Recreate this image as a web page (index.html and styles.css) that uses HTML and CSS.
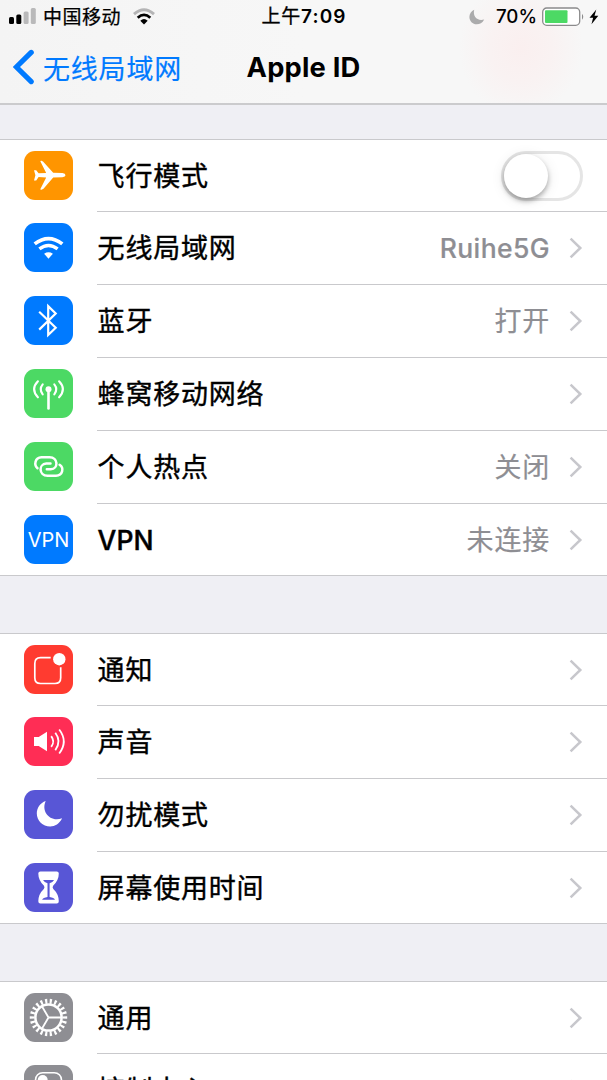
FILE: index.html
```html
<!DOCTYPE html>
<html lang="zh-CN">
<head>
<meta charset="utf-8">
<title>Apple ID</title>
<link rel="stylesheet" href="styles.css">
</head>
<body>
<svg class="defs" width="0" height="0"><defs>
  <symbol id="chevron" viewBox="0 0 14 22"><path d="M1.6 1.6 11.3 11 1.6 20.4" fill="none" stroke="#c7c7cc" stroke-width="2.5"/></symbol>
</defs></svg>
<div class="screen">
  <header class="header">
    <div class="status">
      <div class="status-left">
        <svg class="signal" width="28" height="17" viewBox="0 0 28 17"><rect x="0" y="9" width="5" height="7" rx="1.5"/><rect x="7.3" y="6.5" width="5" height="9.5" rx="1.5"/><g fill="#b9b9ba"><rect x="14.6" y="3.5" width="5" height="12.5" rx="1.5"/><rect x="21.8" y="0" width="5" height="16" rx="1.5"/></g></svg>
        <span class="carrier">中国移动</span>
        <svg class="wifi" width="22" height="17" viewBox="0 0 22 17" fill="none" stroke="#000"><path d="M1 6.1Q11-2.7 21 6.1" stroke="#b4b4b5" stroke-width="2.9"/><path d="M4.7 9.7Q11 4.1 17.3 9.7" stroke-width="2.8"/><path d="M7.3 12.8Q11 9.4 14.7 12.8L11 16.5Z" fill="#000" stroke="none"/></svg>
      </div>
      <div class="clock"><span class="ampm">上午</span>7:09</div>
      <div class="status-right">
        <svg class="dnd" width="16" height="16" viewBox="0 0 16 16"><path d="M5.2.8C3.5 7.3 8.4 12.6 15.2 10.5 13.5 14 10.7 15.3 7.8 15.3 3.6 15.3.4 12 .4 8 .4 4.8 2.2 2.1 5.2.8Z" fill="#ababac"/></svg>
        <span class="percent">70%</span>
        <svg class="battery" width="43" height="20" viewBox="0 0 43 20"><rect x=".7" y="1" width="37" height="17.3" rx="4" fill="#fff" stroke="#8b8b8c" stroke-width="1.3"/><rect x="3" y="3.3" width="22.5" height="12.7" rx="1" fill="#4cd964"/><path d="M40 6.7Q42.5 9.7 40 12.7Z" fill="#8b8b8c"/></svg>
        <svg class="bolt" width="10" height="16" viewBox="0 0 10 16"><path d="M7.3.5.5 8.8H4.1L2.5 15.2 9.3 6.7H5.5Z"/></svg>
      </div>
    </div>
    <nav class="nav">
      <a class="back"><svg width="22" height="36" viewBox="0 0 22 36"><path d="M18.2 3.4 3.4 18 18.2 32.6" fill="none" stroke="#007aff" stroke-width="5.2" stroke-linecap="round"/></svg><span>无线局域网</span></a>
      <h1 class="title">Apple ID</h1>
    </nav>
  </header>

  <main class="list">
    <section class="group">
      <div class="row">
        <svg class="icon orange" viewBox="0 0 49 49"><path d="M10 19.2H12.2L14.6 22.3 22.2 22 16.3 10.2Q16.2 9.6 17.5 9.8L19 10.5 29.2 21.8 38.4 22Q41.5 22.6 41.5 24.2 41.5 25.8 38.4 26.3L29.2 26.5 19.5 37.7 17.5 38.7Q16 38.9 16.4 38L22.2 26.4 14.6 26 12.2 29.5H10L11.4 24.3Z" fill="#fff"/></svg>
        <div class="cell"><span class="label">飞行模式</span><span class="switch"><i class="knob"></i></span></div>
      </div>
      <div class="row">
        <svg class="icon blue" viewBox="0 0 49 49" fill="none" stroke="#fff"><path d="M10.7 20.9Q24.5 10.2 38.3 20.9" stroke-width="3.7"/><path d="M15.4 25.9Q24.5 19.1 33.6 25.9" stroke-width="3.5"/><path d="M20.1 30.7Q24.5 27.9 28.9 30.7L24.5 35.8Z" fill="#fff" stroke="none"/></svg>
        <div class="cell"><span class="label">无线局域网</span><span class="value latin">Ruihe5G</span><svg class="chevron"><use href="#chevron"/></svg></div>
      </div>
      <div class="row">
        <svg class="icon blue" viewBox="0 0 49 49"><path d="M15.2 15.8 31.7 31.8 24.2 39V10.2L31.7 17.5 15.2 33.6" fill="none" stroke="#fff" stroke-width="2.2"/></svg>
        <div class="cell"><span class="label">蓝牙</span><span class="value">打开</span><svg class="chevron"><use href="#chevron"/></svg></div>
      </div>
      <div class="row">
        <svg class="icon green" viewBox="0 0 49 49" fill="none" stroke="#fff" stroke-width="2.1" stroke-linecap="round"><path d="M24.5 22V39.5" stroke-width="2.6"/><circle cx="24.5" cy="20.3" r="3" fill="#fff" stroke="none"/><path d="M18.7 15.4Q14.7 20.3 18.7 25.4M30.3 15.4Q34.3 20.3 30.3 25.4M13.9 12.3Q6.3 20.3 13.9 28.3M35.1 12.3Q42.7 20.3 35.1 28.3"/></svg>
        <div class="cell"><span class="label">蜂窝移动网络</span><svg class="chevron"><use href="#chevron"/></svg></div>
      </div>
      <div class="row">
        <svg class="icon green" viewBox="0 0 49 49" fill="none" stroke="#fff" stroke-width="2.5" stroke-linecap="round"><path d="M13.5 26.2C9.8 23 10.8 15.5 17.5 15.3H25.5C34.5 15.5 34.5 26.8 26.8 27.3H22.8"/><path d="M35.6 22.8C40.3 26 38.8 33.6 32 33.7H23.6C14.5 33.5 14.5 22.1 22.2 21.6H26.5"/></svg>
        <div class="cell"><span class="label">个人热点</span><span class="value">关闭</span><svg class="chevron"><use href="#chevron"/></svg></div>
      </div>
      <div class="row">
        <div class="icon blue vpn">VPN</div>
        <div class="cell"><span class="label latin">VPN</span><span class="value">未连接</span><svg class="chevron"><use href="#chevron"/></svg></div>
      </div>
    </section>

    <section class="group">
      <div class="row">
        <svg class="icon red" viewBox="0 0 49 49"><path d="M26.7 12.7H16.5Q10.8 12.7 10.8 18.4V32.8Q10.8 38.5 16.5 38.5H31Q36.7 38.5 36.7 32.8V22.2" fill="none" stroke="#fff" stroke-width="1.7"/><circle cx="35.3" cy="14.2" r="6.2" fill="#fff"/></svg>
        <div class="cell"><span class="label">通知</span><svg class="chevron"><use href="#chevron"/></svg></div>
      </div>
      <div class="row">
        <svg class="icon pink" viewBox="0 0 49 49"><path d="M10 20H14.7L23 14.7V34.2L14.7 29H10Z" fill="#fff"/><path d="M27.2 19.1Q31.3 24.5 27.2 29.9M31.3 15.8Q37.8 24.5 31.3 33.2M35.2 12.5Q44.4 24.5 35.2 36.5" fill="none" stroke="#fff" stroke-width="1.8"/></svg>
        <div class="cell"><span class="label">声音</span><svg class="chevron"><use href="#chevron"/></svg></div>
      </div>
      <div class="row">
        <svg class="icon purple" viewBox="0 0 49 49"><path d="M21.7 10.9C16.8 21.6 26.1 32.5 38.1 28.2 35.5 33.7 30.9 36.4 26.2 36.4 18.7 36.4 12.8 30.7 12.8 23.5 12.8 17.7 16.3 12.8 21.7 10.9Z" fill="#fff"/></svg>
        <div class="cell"><span class="label">勿扰模式</span><svg class="chevron"><use href="#chevron"/></svg></div>
      </div>
      <div class="row">
        <svg class="icon purple" viewBox="0 0 49 49"><path d="M16.4 8.5H32.7Q34.8 8.5 34.8 10.5 34.8 17.2 29.3 22.5 27.9 24.2 29.3 25.9 34.8 31 34.8 38.3 34.8 40.5 32.7 40.5H16.4Q14.3 40.5 14.3 38.3 14.3 31 19.8 25.9 21.2 24.2 19.8 22.5 14.3 17.2 14.3 10.5 14.3 8.5 16.4 8.5Z" fill="#fff"/><path d="M19 16.9H30.1Q28.8 19.1 25.6 20.3V34Q30 34.6 31 36.7H18.1Q19.1 34.6 23.5 34V20.3Q20.3 19.1 19 16.9Z" fill="#5856d6"/></svg>
        <div class="cell"><span class="label">屏幕使用时间</span><svg class="chevron"><use href="#chevron"/></svg></div>
      </div>
    </section>

    <section class="group">
      <div class="row">
        <svg class="icon gray" viewBox="0 0 49 49" fill="none" stroke="#fff"><circle cx="24.5" cy="24.5" r="16.3" stroke-width="4.8" pathLength="88" stroke-dasharray="1.9 2.1" stroke-dashoffset="0.95"/><circle cx="24.5" cy="24.5" r="13.1" stroke-width="2.5"/><path d="M24.5 24.5H37M24.5 24.5 18.2 13.7M24.5 24.5 18.2 35.3" stroke-width="1.8"/></svg>
        <div class="cell"><span class="label">通用</span><svg class="chevron"><use href="#chevron"/></svg></div>
      </div>
      <div class="row">
        <svg class="icon gray" viewBox="0 0 49 49"><rect x="11.5" y="7.7" width="26" height="14.5" rx="7.2" fill="none" stroke="#fff" stroke-width="1.6"/><circle cx="18.7" cy="15" r="5" fill="#fff"/><rect x="11" y="26.5" width="27" height="15" rx="7.5" fill="#fff"/></svg>
        <div class="cell"><span class="label">控制中心</span><svg class="chevron"><use href="#chevron"/></svg></div>
      </div>
    </section>
  </main>
</div>
</body>
</html>
```
FILE: styles.css
```css
* { box-sizing: border-box; }
body {
  margin: 0;
  height: 1080px;
  overflow: hidden;
  background: #efeff4;
  color: #000;
  font-family: Inter, "Noto Sans CJK SC", sans-serif;
}
.defs { display: block; height: 0; }
.screen { width: 607px; height: 1080px; overflow: hidden; }
.header {
  height: 105px;
  border-bottom: 2px solid #cbcbcd;
  background:
    radial-gradient(ellipse 62px 68px at 521px 48px, #faefef 0%, #f9f2f2 50%, rgba(248, 247, 247, 0) 100%),
    linear-gradient(90deg, #f4f4f4, #f7f7f7 50%, #f7f7f7);
}
.status {
  display: grid;
  grid-template-columns: 1fr auto 1fr;
  align-items: center;
  height: 33px;
  padding: 0 8px 0 9px;
}
.status-left, .status-right { display: flex; align-items: center; }
.status-right { justify-content: flex-end; }
.carrier { margin-left: 6px; padding-top: 2px; font-size: 19px; letter-spacing: .5px; line-height: 30px; -webkit-text-stroke: .25px #000; }
.wifi { margin-left: 12px; }
.clock { padding-top: 1px; font-size: 19px; font-weight: 600; line-height: 30px; letter-spacing: 1.1px; }
.ampm { font-weight: 400; letter-spacing: .8px; -webkit-text-stroke: .3px #000; }
.percent { margin-left: 11px; font-size: 18.7px; font-weight: 500; line-height: 30px; padding-top: 1px; }
.battery { margin-left: 5px; }
.bolt { margin-left: 4px; }
.nav {
  display: grid;
  grid-template-columns: 1fr auto 1fr;
  align-items: center;
  height: 68px;
  padding: 0 13px;
}
.back { display: flex; align-items: center; color: #007aff; font-size: 27px; letter-spacing: .8px; line-height: 40px; }
.back span { margin-left: 8px; padding-top: 5px; -webkit-text-stroke: .2px #007aff; }
.title { margin: 0; padding-top: 2px; font-size: 27.3px; font-weight: 700; line-height: 40px; letter-spacing: .2px; }
.list { display: flex; flex-direction: column; gap: 57px; padding-top: 34px; }
.group { background: #fff; border: solid #c9c9cc; border-width: 1px 0; }
.row { display: flex; align-items: center; height: 73px; padding-left: 24px; }
.row:first-child { height: 72px; }
.row:last-child { height: 71px; }
.icon { width: 49px; height: 49px; border-radius: 11px; flex: none; margin-bottom: 2px; }
.row:last-child .icon { margin-bottom: 0; }
.cell {
  display: flex;
  align-items: center;
  flex: 1;
  height: 100%;
  margin-left: 24px;
  padding-right: 24px;
  border-bottom: 1px solid #c9c9cc;
}
.row:last-child .cell { border-bottom: 0; }
.label { padding: 2px 0 0 .6px; font-size: 27px; letter-spacing: .8px; line-height: 40px; margin-right: auto; -webkit-text-stroke: .4px #000; }
.label.latin { padding-top: 0; font-size: 26.5px; font-weight: 500; letter-spacing: 0; }
.value { padding-top: 2px; color: #8e8e93; font-size: 27px; letter-spacing: .8px; line-height: 40px; -webkit-text-stroke: .2px #8e8e93; }
.value.latin { padding-top: 0; font-size: 26.5px; font-weight: 500; letter-spacing: .4px; }
.chevron { width: 14px; height: 22px; margin-left: 19px; flex: none; }
.switch {
  display: flex;
  width: 82px;
  height: 50px;
  padding: 0;
  border: 3px solid #e5e5e5;
  border-radius: 25px;
}
.knob { width: 44px; height: 44px; border-radius: 50%; background: #fff; box-shadow: 0 3px 5px rgba(0, 0, 0, .3), 0 2px 14px rgba(0, 0, 0, .1); }
.vpn { display: flex; align-items: center; justify-content: center; color: #fff; font-size: 20px; line-height: 24px; }
.orange { background: #ff9500; }
.blue { background: #007aff; }
.green { background: #4cd964; }
.red { background: #ff3b30; }
.pink { background: #ff2d55; }
.purple { background: #5856d6; }
.gray { background: #8e8e93; }
```
